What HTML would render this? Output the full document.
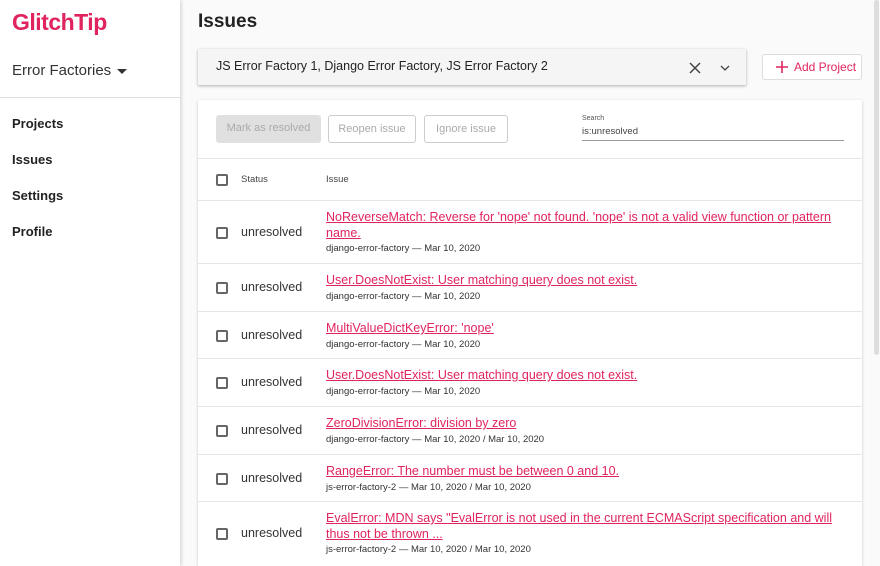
<!DOCTYPE html>
<html style="overflow:hidden;height:566px"><head><style>
*{box-sizing:border-box;margin:0;padding:0}
body{width:880px;height:566px;overflow:hidden;font-family:"Liberation Sans",sans-serif;background:#fafafa;position:relative;color:#222}
.side{position:absolute;left:0;top:0;width:180px;height:566px;background:#fff;box-shadow:1px 0 4px rgba(0,0,0,.18)}
.logo{position:absolute;left:12px;top:9px;font-size:23px;font-weight:bold;color:#e0245e;letter-spacing:-0.5px}
.org{position:absolute;left:12px;top:62px;font-size:15px;color:#333}
.org span{display:inline-block;border-left:5px solid transparent;border-right:5px solid transparent;border-top:5px solid #333;margin-left:6px;vertical-align:middle}
.hr{position:absolute;left:0;top:97px;width:180px;height:1px;background:#e0e0e0}
.nav{position:absolute;left:12px;font-size:13px;color:#222;font-weight:600}
h1{position:absolute;left:198px;top:11px;font-size:19px;font-weight:bold;color:#222}
.sel{position:absolute;left:198px;top:49px;width:548px;height:36px;background:#f5f5f5;box-shadow:0 1px 3px rgba(0,0,0,.3);font-size:12.5px;padding:10px 18px;color:#222}
.add{position:absolute;left:762px;top:54px;width:100px;height:26px;border:1px solid #ddd;border-radius:3px;background:#fff;color:#e0245e;font-size:12px;padding:5px 0 0 31px}
.card{position:absolute;left:198px;top:100px;width:664px;height:466px;background:#fff;box-shadow:0 1px 3px rgba(0,0,0,.2);overflow:hidden}
.btn{position:absolute;top:15px;height:28px;border-radius:3px;font-size:11px;color:#aaa;text-align:center;line-height:26px}
.row{position:absolute;left:0;width:664px;border-top:1px solid #e6e6e6}
.cb{position:absolute;left:18px;width:12px;height:12px;border:2px solid #666;border-radius:2px}
.st{position:absolute;left:43px;font-size:12.5px;color:#333}
.t{position:absolute;left:128px;font-size:12.5px;color:#e0245e;text-decoration:underline;width:510px;line-height:16px}
.m{position:absolute;left:128px;font-size:9.5px;color:#333}
</style></head><body>
<div class="side">
<div class="logo">GlitchTip</div>
<div class="org">Error Factories<span></span></div>
<div class="hr"></div>
<div class="nav" style="top:116px">Projects</div>
<div class="nav" style="top:152px">Issues</div>
<div class="nav" style="top:188px">Settings</div>
<div class="nav" style="top:224px">Profile</div>
</div>
<h1>Issues</h1>
<div class="sel">JS Error Factory 1, Django Error Factory, JS Error Factory 2
<svg style="position:absolute;left:491px;top:13px" width="12" height="12"><path d="M1 1L11 11M11 1L1 11" stroke="#444" stroke-width="1.5"/></svg>
<svg style="position:absolute;left:522px;top:16px" width="10" height="7"><path d="M1 1L5 5L9 1" stroke="#444" stroke-width="1.3" fill="none"/></svg>
</div>
<div class="add"><svg style="position:absolute;left:13px;top:6px" width="12" height="12"><path d="M6 0V12M0 6H12" stroke="#e0245e" stroke-width="1.6"/></svg>Add Project</div>
<div class="card">
<div class="btn" style="left:18px;width:105px;background:#e0e0e0">Mark as resolved</div>
<div class="btn" style="left:130px;width:88px;border:1px solid #ccc">Reopen issue</div>
<div class="btn" style="left:226px;width:84px;border:1px solid #ccc">Ignore issue</div>
<div style="position:absolute;left:384px;top:15px;font-size:7px;color:#555">Search</div>
<div style="position:absolute;left:384px;top:26px;width:262px;height:15px;border-bottom:1px solid #999;font-size:9.5px;color:#444">is:unresolved</div>
<div class="row" style="top:58px;height:42px"><div class="cb" style="top:15px"></div><div class="st" style="top:15px;font-size:9.5px;color:#444">Status</div><div class="m" style="top:15px;color:#444">Issue</div></div>
<div class="row" style="top:100px;height:64px"><div class="cb" style="top:26px"></div><div class="st" style="top:24px">unresolved</div><div class="t" style="top:8px">NoReverseMatch: Reverse for 'nope' not found. 'nope' is not a valid view function or pattern name.</div><div class="m" style="top:42px">django-error-factory — Mar 10, 2020</div></div>
<div class="row" style="top:163px;height:48px"><div class="cb" style="top:18px"></div><div class="st" style="top:16px">unresolved</div><div class="t" style="top:8px">User.DoesNotExist: User matching query does not exist.</div><div class="m" style="top:27px">django-error-factory — Mar 10, 2020</div></div>
<div class="row" style="top:211px;height:48px"><div class="cb" style="top:18px"></div><div class="st" style="top:16px">unresolved</div><div class="t" style="top:8px">MultiValueDictKeyError: 'nope'</div><div class="m" style="top:27px">django-error-factory — Mar 10, 2020</div></div>
<div class="row" style="top:258px;height:48px"><div class="cb" style="top:18px"></div><div class="st" style="top:16px">unresolved</div><div class="t" style="top:8px">User.DoesNotExist: User matching query does not exist.</div><div class="m" style="top:27px">django-error-factory — Mar 10, 2020</div></div>
<div class="row" style="top:306px;height:48px"><div class="cb" style="top:18px"></div><div class="st" style="top:16px">unresolved</div><div class="t" style="top:8px">ZeroDivisionError: division by zero</div><div class="m" style="top:27px">django-error-factory — Mar 10, 2020 / Mar 10, 2020</div></div>
<div class="row" style="top:354px;height:48px"><div class="cb" style="top:18px"></div><div class="st" style="top:16px">unresolved</div><div class="t" style="top:8px">RangeError: The number must be between 0 and 10.</div><div class="m" style="top:27px">js-error-factory-2 — Mar 10, 2020 / Mar 10, 2020</div></div>
<div class="row" style="top:401px;height:70px"><div class="cb" style="top:26px"></div><div class="st" style="top:24px">unresolved</div><div class="t" style="top:8px">EvalError: MDN says "EvalError is not used in the current ECMAScript specification and will thus not be thrown ...</div><div class="m" style="top:42px">js-error-factory-2 — Mar 10, 2020 / Mar 10, 2020</div></div>
</div>
<div style="position:absolute;left:874px;top:0;width:5px;height:355px;background:#ddd;border-radius:3px"></div>
</body></html>
